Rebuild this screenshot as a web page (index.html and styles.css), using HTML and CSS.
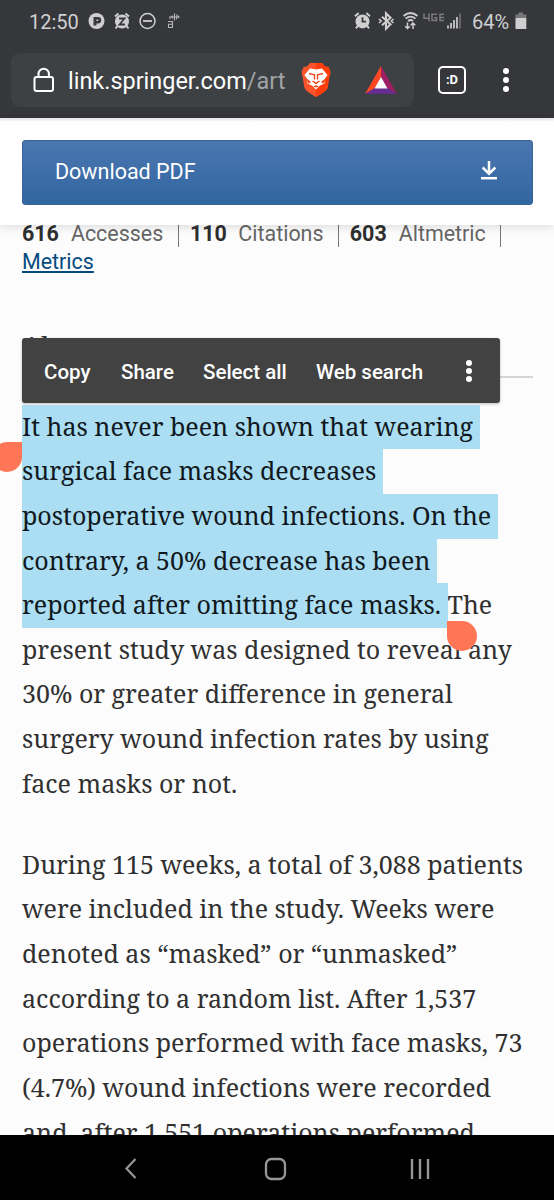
FILE: index.html
```html
<!DOCTYPE html>
<html lang="en">
<head>
<meta charset="utf-8">
<title>Springer article</title>
<link rel="stylesheet" href="styles.css">
</head>
<body>
<div class="screen">
  <header class="browser">
    <div class="status">
      <span class="clock">12:50</span>
      <svg class="status-left" width="96" height="20" viewBox="0 0 96 20">
        <circle cx="8.500" cy="10" r="8" fill="#cfcfd0"/>
        <path d="M5.500 6h4.500a3.200 3.200 0 0 1 0 6.400H8.500V14.500H5.500z" fill="#38393d"/>
        <path d="M8.500 8.500h1.700v1.500H8.500z" fill="#cfcfd0"/>
        <circle cx="34" cy="10.500" r="7" fill="#cfcfd0"/>
        <path d="M27 5.500l3.500-3M41 5.500l-3.500-3M29.500 15l-2 2.500M38.500 15l2 2.500" stroke="#cfcfd0" stroke-width="2"/>
        <path d="M31 7.500h5.500l-5 6h5.500" fill="none" stroke="#38393d" stroke-width="1.800"/>
        <circle cx="59.500" cy="10" r="7.500" fill="none" stroke="#cfcfd0" stroke-width="1.500"/>
        <path d="M55 10h9" stroke="#cfcfd0" stroke-width="1.800"/>
        <path d="M80 10.500h4.500V16.500H80.500v-3.200h4M82 8V5.700h2M86.500 2.500v7M84.300 4.500v3M88.700 3.500v5M90.500 4.500v2.500M82.500 6h9" fill="none" stroke="#b5b5b7" stroke-width="1.100"/>
      </svg>
      <svg class="status-right" width="108" height="20" viewBox="0 0 108 20">
        <g transform="translate(0 -.3)"><circle cx="8.500" cy="10.700" r="7" fill="#cfcfd0"/><path d="M1 5.500l3.700-3.200M16 5.500l-3.700-3.200M4 15L2 17.700M13 15l2 2.700" stroke="#cfcfd0" stroke-width="2"/><path d="M8.500 6.500v4.500H12" fill="none" stroke="#38393d" stroke-width="1.800"/></g>
        <path d="M28 5.700l8.500 7.600-4.500 4.400V2.300l4.500 4.400-8.500 7.600" fill="none" stroke="#cfcfd0" stroke-width="2.100"/><path d="M25 8l2.200 2-2.200 2M39.500 8l-2.200 2 2.200 2" fill="none" stroke="#cfcfd0" stroke-width="1.600"/>
        <path d="M49.500 5q7-6 14 0M51.500 7.700q5-4 10 0M54 10q2.500-2 5 0" fill="none" stroke="#cfcfd0" stroke-width="1.700"/><path d="M53.500 11.500v6m-2.300-2.300l2.300 2.300 2.300-2.300M59 18v-6m-2.300 2.300l2.300-2.300 2.300 2.300" fill="none" stroke="#cfcfd0" stroke-width="1.500"/>
        <path d="M70 2.500v4.800h5M75 2.500v7.700M83 3.200h-5v6.300h4.500V6.800H80M90 3.200h-4v6.300h4M86 6.400h4" fill="none" stroke="#7b7b7e" stroke-width="1.500"/>
        <path d="M94 17.500v-3M97 17.500v-5.500M100 17.500V9M103 17.500V6" stroke="#cfcfd0" stroke-width="1.700"/><path d="M106 17.500V2.500" stroke="#77777a" stroke-width="1.500"/>
      </svg>
      <span class="percent">64%</span>
      <svg class="battery" width="12" height="18" viewBox="0 0 12 18"><path d="M3.500 .5h4.500v2H11.300v4H.5V2.500h3z" fill="#77777a"/><rect x=".5" y="6" width="10.800" height="11" fill="#cfcfd0"/></svg>
    </div>
    <div class="toolbar">
      <div class="address">
        <svg class="lock" width="22" height="26" viewBox="0 0 22 26"><rect x="1.500" y="10" width="18.500" height="14" rx="2" fill="none" stroke="#fff" stroke-width="2"/><path d="M5.500 10V7a5.200 5.200 0 0 1 10.400 0v3" fill="none" stroke="#fff" stroke-width="2"/></svg>
        <span class="url">link.springer.com<span class="path">/art</span></span>
        <svg class="brave" width="30" height="36" viewBox="0 0 30 36">
          <path d="M9 1h12l3 3.500 3.500.5 2 5-1 4-2 12q-1.500 3.500-11.500 9Q5 29.500 3.500 26L1.500 14 .5 10l2-5L6 4.500z" fill="#fb542b"/><path d="M15 1h6l3 3.500 3.500.5 2 5-1 4-2 12q-1.500 3.500-11.500 9z" fill="#ff3d0a"/>
          <path d="M9 6.500l6 1 6-1 5.500 6.500-3.500 5 .7 3.500-4.700 2-4 4-4-4-4.700-2L7 18l-3.500-5z" fill="#fff"/>
          <path d="M8 11.500l5.500 1.200v4.800M22 11.500l-5.500 1.200v4.800M11.500 19l3.500 2.300L18.500 19" fill="none" stroke="#f0461c" stroke-width="1.400"/>
          <path d="M6.500 17l3.500 3-2.500 2zM23.500 17L20 20l2.500 2zM12 24.500l3-1.300 3 1.300-3 1z" fill="#f0461c"/>
        </svg>
        <svg class="bat" width="32" height="28" viewBox="0 0 32 28"><path d="M16 0L0 28l10-6 6-11z" fill="#ff4724"/><path d="M16 0l16 28-10-6-6-11z" fill="#9e1f63"/><path d="M0 28h32l-10-6H10z" fill="#662d91"/><path d="M16 11l6.500 11.500h-13z" fill="#fff"/></svg>
      </div>
      <span class="tabs">:D</span>
      <span class="dots"><i></i><i></i><i></i></span>
    </div>
  </header>
  <div class="download-bar">
    <div class="download">
      <span>Download PDF</span>
      <svg width="18" height="22" viewBox="0 0 18 22"><path d="M9 1v12.500M2.700 7.500L9 13.800l6.300-6.300" fill="none" stroke="#fff" stroke-width="2.500"/><path d="M1 18.200h16" stroke="#fff" stroke-width="2.500"/></svg>
    </div>
  </div>
  <main class="article">
    <div class="metrics"><b>616</b><span class="m1">Accesses</span><b>110</b><span class="m2">Citations</span><b>603</b><span class="m3">Altmetric</span></div>
    <a class="metrics-link">Metrics</a>
    <div class="heading"><h2>Abstract</h2>
      <div class="menu"><span class="copy">Copy</span><span class="share">Share</span><span class="select">Select all</span><span class="search">Web search</span><span class="dots small"><i></i><i></i><i></i></span></div>
    </div>
    <p>
      <span class="line"><mark>It has never been shown that wearing </mark></span>
      <span class="line"><mark>surgical face masks decreases <span class="handle start"></span></mark></span>
      <span class="line"><mark>postoperative wound infections. On the </mark></span>
      <span class="line"><mark>contrary, a 50% decrease has been </mark></span>
      <span class="line"><mark>reported after omitting face masks. <span class="handle end"></span></mark>The</span>
      <span class="line">present study was designed to reveal any</span>
      <span class="line">30% or greater difference in general</span>
      <span class="line">surgery wound infection rates by using</span>
      <span class="line">face masks or not.</span>
    </p>
    <p>
      <span class="line">During 115 weeks, a total of 3,088 patients</span>
      <span class="line">were included in the study. Weeks were</span>
      <span class="line">denoted as “masked” or “unmasked”</span>
      <span class="line">according to a random list. After 1,537</span>
      <span class="line">operations performed with face masks, 73</span>
      <span class="line">(4.7%) wound infections were recorded</span>
      <span class="line">and, after 1,551 operations performed</span>
    </p>
  </main>
  <nav class="navbar">
    <svg width="14" height="24" viewBox="0 0 14 24"><path d="M11.500 2L2.500 11.500l9 9.500" fill="none" stroke="#969696" stroke-width="2.200"/></svg>
    <svg class="home" width="24" height="24" viewBox="0 0 24 24"><rect x="2" y="2" width="19" height="20" rx="5.500" fill="none" stroke="#969696" stroke-width="2.300"/></svg>
    <svg width="20" height="24" viewBox="0 0 20 24"><path d="M2 2v20M10 2v20M18 2v20" stroke="#969696" stroke-width="2.400"/></svg>
  </nav>
</div>
</body>
</html>
```
FILE: styles.css
```css
* { box-sizing: border-box; }
body { margin: 0; font-family: Roboto, sans-serif; background: #fcfcfc; }
svg { display: block; flex: none; }
.screen { width: 554px; height: 1200px; overflow: hidden; display: flex; flex-direction: column; }
.browser { height: 118px; flex: none; background: #36373b; }
.status { height: 53px; padding: 0 27px 10px 29px; display: flex; align-items: center; color: #d0d0d2; font-size: 20px; }
.clock { width: 59px; white-space: nowrap; }
.status-left, .status-right, .battery { margin-top: -2px; }
.status-right { margin-left: auto; }
.percent { margin-left: 10px; width: 43px; white-space: nowrap; }
.toolbar { height: 54px; padding-left: 11px; display: flex; align-items: center; }
.address { width: 403px; height: 54px; padding-left: 22px; border-radius: 9px; background: #3e4144; display: flex; align-items: center; }
.lock { margin-top: -1px; }
.url { width: 219px; margin: 1.500px 0 0 13px; color: #fff; font-size: 23.450px; white-space: nowrap; }
.path { color: #a1a4a6; }
.brave { margin-left: 14px; }
.bat { margin-left: 34px; }
.tabs { width: 28px; height: 28px; margin-left: 24px; border: 2px solid #fff; border-radius: 5px; color: #fff; font-size: 13px; font-weight: 700; line-height: 23px; text-align: center; }
.dots { margin-left: 37px; display: flex; flex-direction: column; gap: 3px; }
.dots i { width: 6px; height: 6px; border-radius: 50%; background: #fff; }
.download-bar { height: 107px; flex: none; position: relative; z-index: 1; padding: 21.5px 21px 0 22px; background: linear-gradient(#e4e4e4, #fff 4px); box-shadow: 0 2px 9px rgba(0,0,0,.13); }
.download { height: 65.5px; padding: 0 34.500px 2px 32px; display: flex; align-items: center; justify-content: space-between; border: 1px solid #39639c; border-radius: 3px; background: linear-gradient(#4b76b0, #3166a1); color: #fff; font-size: 21.500px; }
.article { flex: 1; min-height: 0; overflow: hidden; padding: 0 17px 0 22px; background: #fcfcfc; }
.metrics { height: 23px; display: flex; align-items: center; font-size: 21.450px; line-height: 27px; color: #666; white-space: nowrap; padding-bottom: 6px; }
.metrics b { color: #2f2f2f; }
.metrics span { margin-left: 12px; margin-right: 11px; border-right: 1.500px solid #777; }
.m1 { width: 108px; }
.metrics .m2 { width: 101px; margin-left: 11.500px; margin-right: 10.500px; }
.m3 { width: 102px; }
.metrics-link { display: block; width: max-content; height: 27px; font-size: 21.450px; line-height: 27px; color: #064b7f; text-decoration: underline; }
.heading { position: relative; height: 102px; margin: 27.700px 0 0; }
.heading h2 { margin: 0; height: 75px; padding-top: 28.300px; border-bottom: 2px solid #d5d5d5; width: 511px; font: 400 27px/32px "Noto Serif", "DejaVu Serif", serif; color: #333; }
.menu { position: absolute; left: -.5px; top: 35.500px; width: 478px; height: 64.500px; padding-left: 22.500px; padding-top: 3px; display: flex; align-items: center; border-radius: 3px; background: #424242; box-shadow: 0 1px 3px rgba(0,0,0,.25); color: #fff; font-size: 20.500px; font-weight: 500; white-space: nowrap; }
.copy { width: 77px; }
.share { width: 82px; }
.select { width: 113px; }
.search { width: 107px; }
.small { margin: -2px 0 0 43px; gap: 2px; }
p { margin: 0 0 36.500px; font: 25.020px/43px "Noto Serif", "DejaVu Serif Condensed", "DejaVu Serif", serif; color: #303030; }
.line { display: block; height: 44.630px; white-space: pre; }
mark { position: relative; display: inline-block; height: 44.630px; background: #abdef3; color: #111820; vertical-align: top; }
.handle { position: absolute; width: 30px; height: 30px; background: #ff7656; }
.start { left: -30px; top: -7px; border-radius: 50% 0 50% 50%; }
.end { left: 100%; top: 37.500px; margin-left: -1px; z-index: 1; border-radius: 0 50% 50% 50%; }
.navbar { height: 65px; flex: none; background: #000; display: flex; align-items: center; padding: 2px 124px 0 124px; justify-content: space-between; }
.home { margin-left: 3px; }
```
